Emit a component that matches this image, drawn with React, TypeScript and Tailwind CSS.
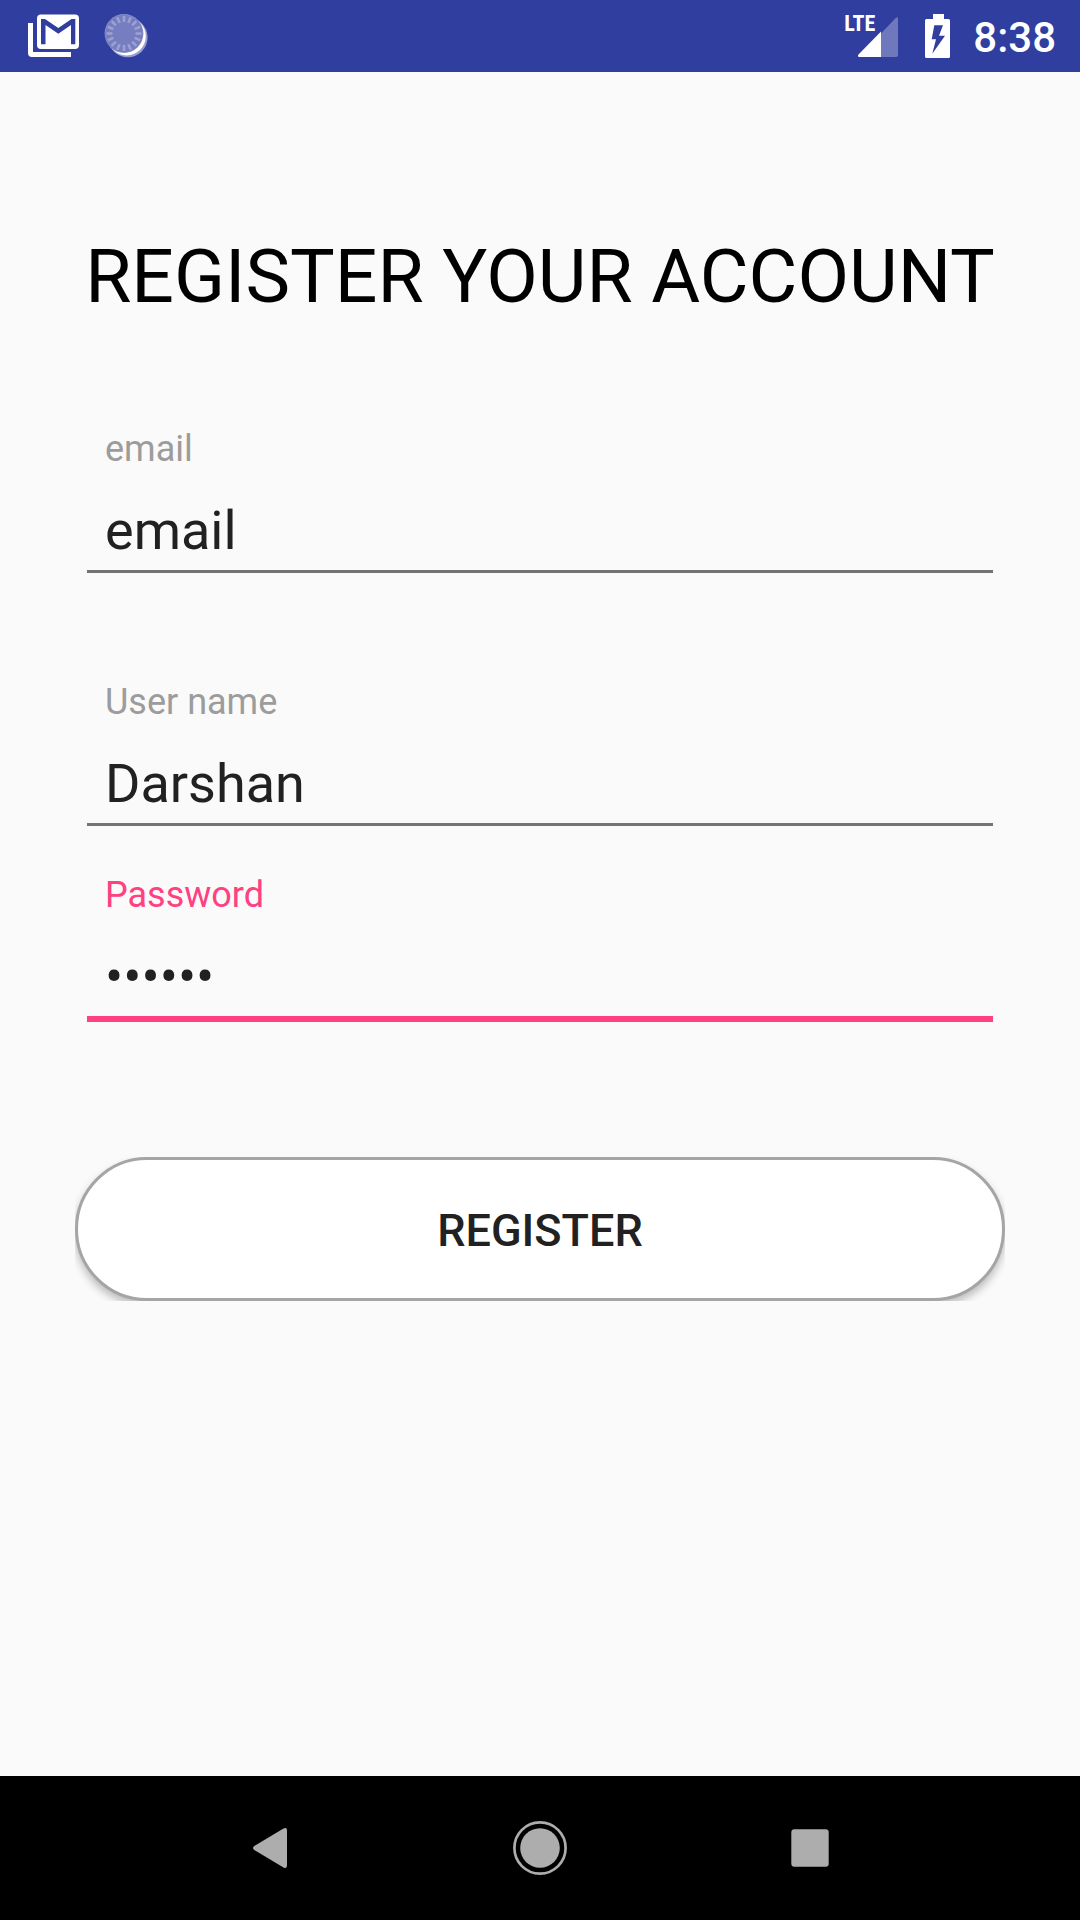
import React, { useState } from "react";

function GmailIcon() {
  return (
    <svg className="h-12 w-14" viewBox="0 0 56 48" aria-hidden="true">
      <path d="M2 11H7V40H45V45H6A4 4 0 0 1 2 41Z" fill="#fff" />
      <rect x="11" y="2.5" width="42" height="34.5" rx="4" fill="#fff" />
      <path
        d="M15 7H19L32.3 16L45.5 7H49.3V32.3H45V13L32.3 21.7L19.5 13V32.3H15Z"
        fill="#303f9f"
      />
    </svg>
  );
}

function SpinnerIcon() {
  const ticks = Array.from({ length: 16 }, (_, i) => i * 22.5);
  return (
    <svg className="h-12 w-12" viewBox="0 0 48 48" aria-hidden="true">
      <circle cx="25.8" cy="25.4" r="19.8" fill="#fff" fillOpacity="0.5" />
      <circle cx="24.6" cy="24.2" r="19.2" fill="#fff" />
      <circle cx="22" cy="21.5" r="19.4" fill="#858bc7" />
      <circle cx="22" cy="21.5" r="18.4" fill="#767dc0" />
      <g stroke="#9ca1d2" strokeWidth="2.6">
        {ticks.map((a) => (
          <path key={a} d="M22 4V10" transform={`rotate(${a} 22 21.5)`} />
        ))}
      </g>
    </svg>
  );
}

function SignalIcon() {
  return (
    <div className="relative">
      <svg className="h-12 w-14" viewBox="0 0 56 48" aria-hidden="true">
        <path d="M37 21.5L51.5 6.2Q54 4 54 7V43Q54 45 52 45H37Z" fill="#6f78bc" />
        <path d="M37 19.5V45H15.5Q13 45 14.5 42.5Z" fill="#fff" />
      </svg>
      <span className="absolute left-0 top-0 font-['Roboto_Condensed','Liberation_Sans_Narrow',Roboto,sans-serif] text-[22px] font-bold leading-6">
        LTE
      </span>
    </div>
  );
}

function BatteryIcon() {
  return (
    <svg className="h-12 w-7" viewBox="0 0 28 48" aria-hidden="true">
      <path d="M9 2H20V7H24.5Q26 7 26 8.5V44.5Q26 46 24.5 46H2.5Q1 46 1 44.500V8.500Q1 7 2.500 7H9Z" fill="#fff" />
      <path d="M10.300 13.300H19L15 23.700H21L8.300 41.700L12 27.300H7.700Z" fill="#303f9f" />
    </svg>
  );
}

function StatusBar() {
  return (
    <header className="flex h-[72px] items-center justify-between bg-[#303f9f] pl-[26px] pr-6 text-white">
      <div className="flex items-center gap-5">
        <GmailIcon />
        <SpinnerIcon />
      </div>
      <div className="flex items-center">
        <SignalIcon />
        <div className="ml-6 mr-[21px]">
          <BatteryIcon />
        </div>
        <time className="pt-1 text-[42px] font-medium leading-[48px]">8:38</time>
      </div>
    </header>
  );
}

type FieldProps = {
  id: string;
  label: string;
  initial: string;
  type?: string;
  active?: boolean;
};

function Field({ id, label, initial, type = "text", active = false }: FieldProps) {
  const [value, setValue] = useState(initial);
  return (
    <div className="flex flex-col gap-[29px]">
      <label
        htmlFor={id}
        className={`px-[18px] text-[36px] leading-[42px] ${active ? "text-[#ff4081]" : "text-[#9c9c9c]"}`}
      >
        {label}
      </label>
      <input
        id={id}
        type={type}
        value={value}
        onChange={(e) => setValue(e.target.value)}
        className={`w-full bg-transparent px-[18px] pb-[7px] text-[54px] leading-[64px] text-[#212121] outline-none ${
          active ? "border-b-6 border-[#ff4081]" : "border-b-3 border-[#737373]"
        }`}
      />
    </div>
  );
}

function NavBar() {
  return (
    <nav className="grid h-36 grid-cols-3 bg-black px-[12.5%] text-[#adadad]">
      <button aria-label="Back" className="flex items-center justify-center">
        <svg className="size-14" viewBox="0 0 56 56" fill="currentColor">
          <path d="M12.300 26L41.500 8.600Q45 7 45 10.500V45.500Q45 49 41.500 47.400L12.300 30Q9.700 28 12.300 26Z" />
        </svg>
      </button>
      <button aria-label="Home" className="flex items-center justify-center">
        <svg className="size-14" viewBox="0 0 56 56">
          <circle cx="28" cy="28" r="25.600" fill="none" stroke="currentColor" strokeWidth="2.700" />
          <circle cx="28" cy="28" r="19.800" fill="currentColor" />
        </svg>
      </button>
      <button aria-label="Recent apps" className="flex items-center justify-center">
        <svg className="size-14" viewBox="0 0 56 56" fill="currentColor">
          <rect x="9.300" y="9.300" width="37.400" height="37.400" rx="3" />
        </svg>
      </button>
    </nav>
  );
}

export default function App() {
  return (
    <div className="flex min-h-screen flex-col bg-[#fafafa] font-[Roboto,sans-serif]">
      <StatusBar />
      <main className="flex-1 px-[75px] pt-40">
        <h1 className="whitespace-nowrap text-center text-[75px] leading-[88px] text-black">
          REGISTER YOUR ACCOUNT
        </h1>
        <form className="mt-[108px]" onSubmit={(e) => e.preventDefault()}>
          <div className="px-3">
            <Field id="email" label="email" initial="email" />
            <div className="mt-[108px]">
              <Field id="username" label="User name" initial="Darshan" />
            </div>
            <div className="mt-12">
              <Field id="password" label="Password" initial="secret" type="password" active />
            </div>
          </div>
          <div className="mt-[135px] overflow-hidden">
            <button
              type="submit"
              className="block h-36 w-full rounded-full border-3 border-[#a5a5a5] bg-white pt-[3px] text-[45px] font-medium text-[#212121] shadow-[0_5px_9px_rgba(0,0,0,0.25)]"
            >
              REGISTER
            </button>
          </div>
        </form>
      </main>
      <NavBar />
    </div>
  );
}
